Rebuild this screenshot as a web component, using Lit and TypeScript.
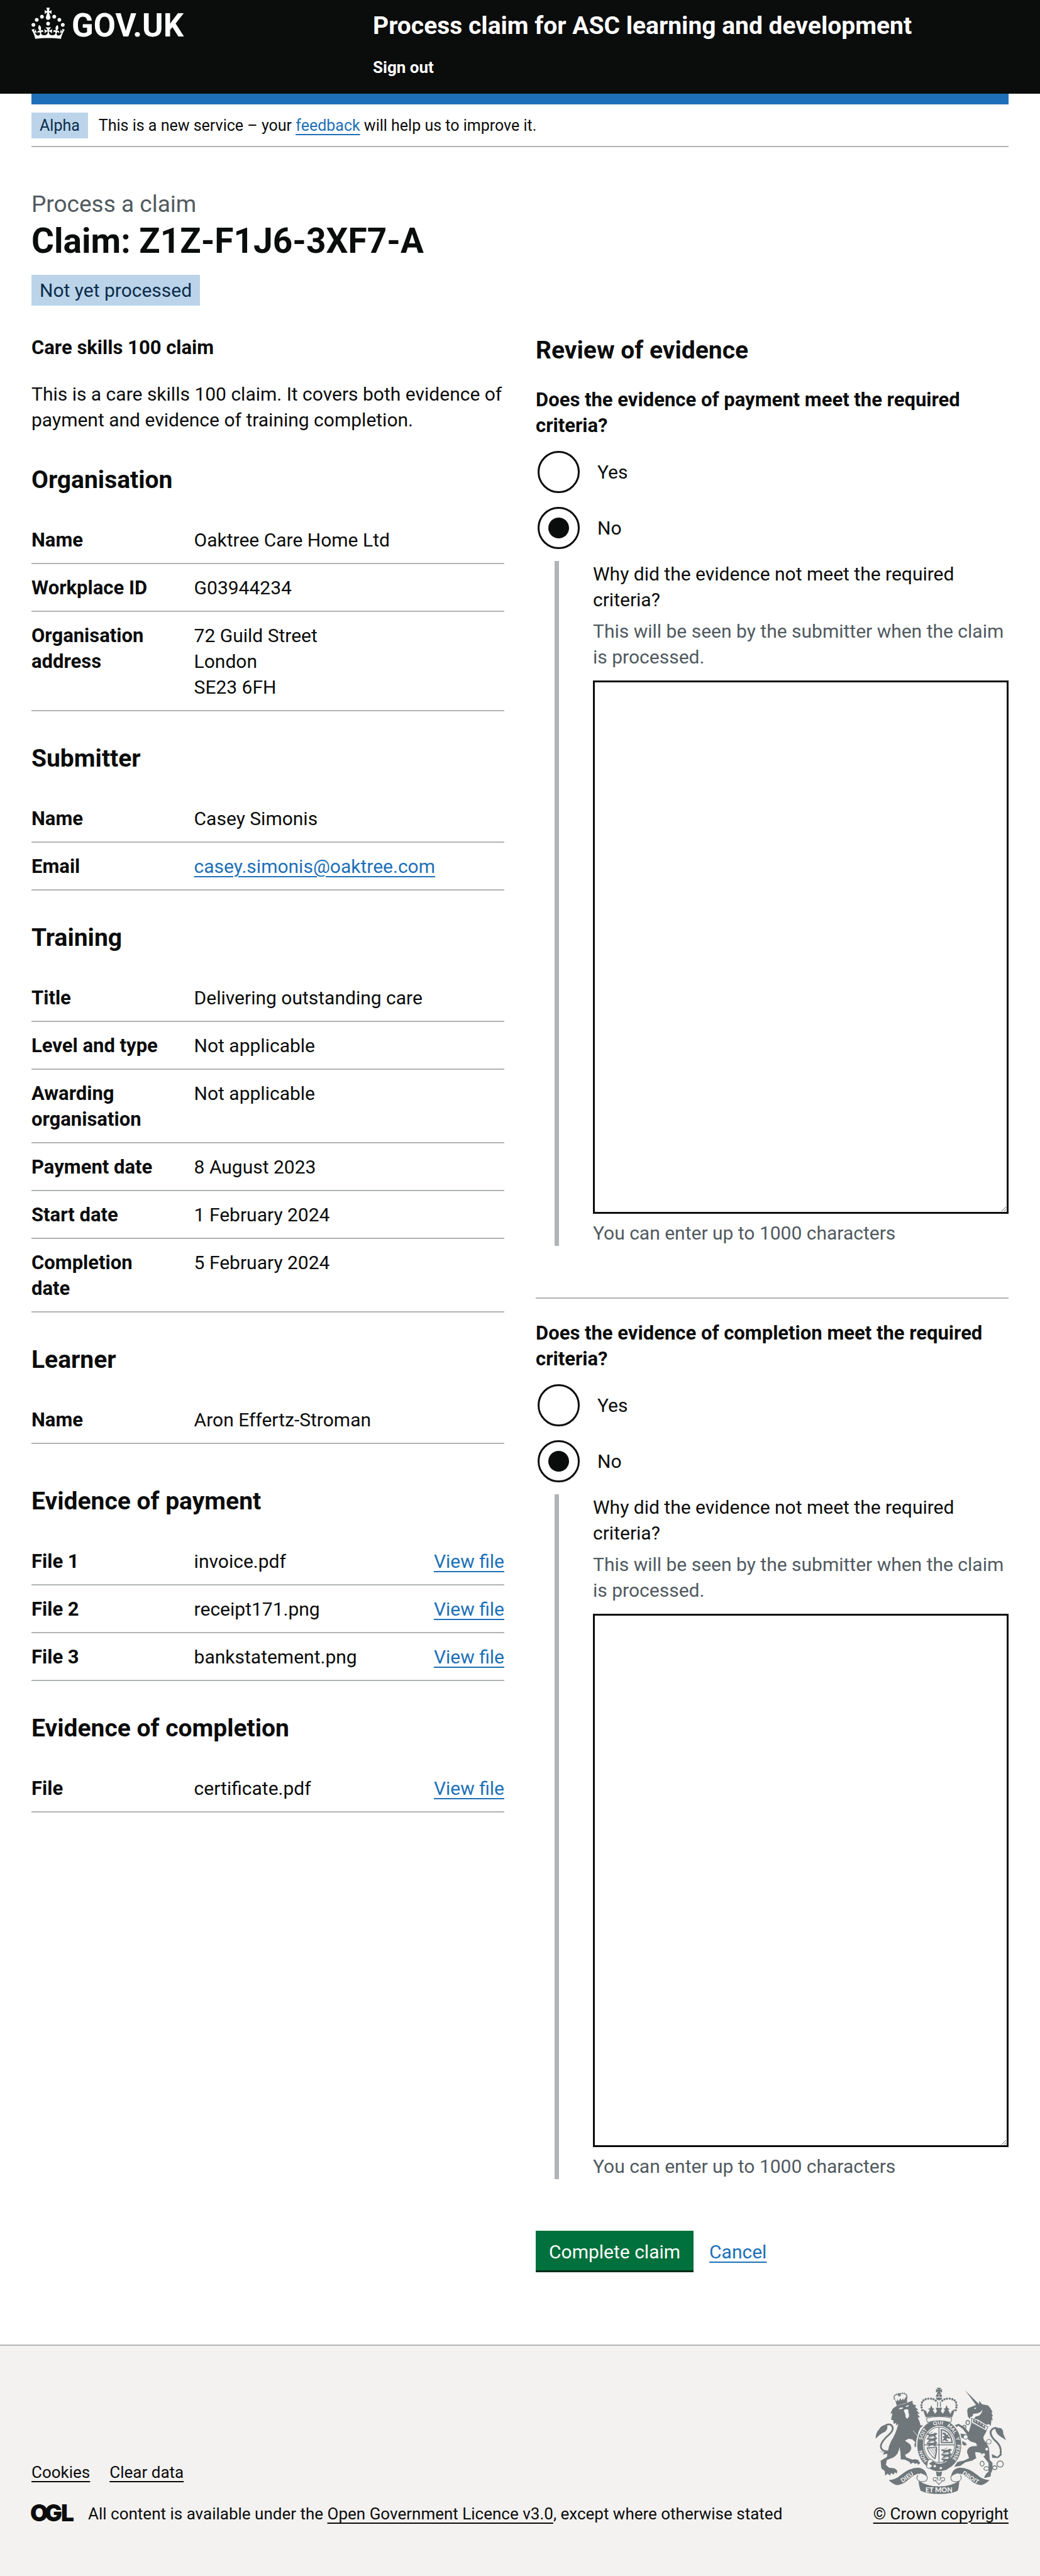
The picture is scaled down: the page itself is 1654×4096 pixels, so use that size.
import { LitElement, html, css, svg, nothing } from "lit";
import { customElement, property } from "lit/decorators.js";

interface Row {
  key: string;
  lines: string[];
  href?: string;
  action?: string;
}

interface Section {
  title: string;
  rows: Row[];
  spaced?: boolean;
}

const SECTIONS: Section[] = [
  {
    title: "Organisation",
    rows: [
      { key: "Name", lines: ["Oaktree Care Home Ltd"] },
      { key: "Workplace ID", lines: ["G03944234"] },
      { key: "Organisation address", lines: ["72 Guild Street", "London", "SE23 6FH"] },
    ],
  },
  {
    title: "Submitter",
    rows: [
      { key: "Name", lines: ["Casey Simonis"] },
      { key: "Email", lines: ["casey.simonis@oaktree.com"], href: "mailto:casey.simonis@oaktree.com" },
    ],
  },
  {
    title: "Training",
    rows: [
      { key: "Title", lines: ["Delivering outstanding care"] },
      { key: "Level and type", lines: ["Not applicable"] },
      { key: "Awarding organisation", lines: ["Not applicable"] },
      { key: "Payment date", lines: ["8 August 2023"] },
      { key: "Start date", lines: ["1 February 2024"] },
      { key: "Completion date", lines: ["5 February 2024"] },
    ],
  },
  {
    title: "Learner",
    rows: [{ key: "Name", lines: ["Aron Effertz-Stroman"] }],
  },
  {
    title: "Evidence of payment",
    spaced: true,
    rows: [
      { key: "File 1", lines: ["invoice.pdf"], action: "View file" },
      { key: "File 2", lines: ["receipt171.png"], action: "View file" },
      { key: "File 3", lines: ["bankstatement.png"], action: "View file" },
    ],
  },
  {
    title: "Evidence of completion",
    rows: [{ key: "File", lines: ["certificate.pdf"], action: "View file" }],
  },
];

const base = css`
  * {
    box-sizing: border-box;
  }
  a {
    color: #1d70b8;
    text-decoration: underline;
    text-decoration-thickness: 2px;
    text-underline-offset: 5px;
  }
`;

@customElement("site-header")
export class SiteHeader extends LitElement {
  static styles = [
    base,
    css`
      :host {
        display: block;
        background: #0b0c0c;
      }
      .inner {
        margin: 0 50px;
        display: grid;
        grid-template-columns: 1fr 2fr;
      }
      .logo {
        display: flex;
        align-items: flex-start;
        gap: 11px;
        padding-top: 12px;
        color: #fff;
        text-decoration: none;
        font-size: 51px;
        line-height: 58px;
        font-weight: 700;
      }
      .crown {
        width: 53px;
        height: 50px;
        fill: currentColor;
      }
      .content {
        display: flex;
        flex-direction: column;
        align-items: flex-start;
        gap: 25px;
        padding: 16px 0 25px 25px;
      }
      .content a {
        color: #fff;
        text-decoration: none;
        font-weight: 700;
      }
      .service {
        font-size: 39px;
        line-height: 50px;
      }
      .nav {
        font-size: 26px;
        line-height: 33px;
      }
    `,
  ];

  render() {
    return html`<header class="inner">
      <a class="logo" href="#">
        <svg class="crown" viewBox="0 0 32 30" aria-hidden="true">
          <path
            d="M22.6 10.4c-1 .4-2-.1-2.4-1-.4-.9.1-2 1-2.4.9-.4 2 .1 2.4 1s-.1 2-1 2.4m-5.9 6.7c-.9.4-2-.1-2.4-1-.4-.9.1-2 1-2.4.9-.4 2 .1 2.4 1s-.1 2-1 2.4m10.8-3.7c-1 .4-2-.1-2.4-1-.4-.9.1-2 1-2.4.9-.4 2 .1 2.4 1s0 2-1 2.4m3.3 4.8c-1 .4-2-.1-2.4-1-.4-.9.1-2 1-2.4.9-.4 2 .1 2.4 1s-.1 2-1 2.4M17 4.7l2.3 1.2V2.5l-2.3.7-.2-.2.9-3h-3.4l.9 3-.2.2c-.1.1-2.3-.7-2.3-.7v3.4L15 4.7c.1.1.1.2.2.2l-1.3 4c-.1.2-.1.4-.1.6 0 1.1.8 2 1.9 2.2h.7c1-.2 1.9-1.1 1.9-2.1 0-.2 0-.4-.1-.6l-1.3-4c-.1-.2 0-.2.1-.3m-7.6 5.7c.9.4 2-.1 2.4-1 .4-.9-.1-2-1-2.4-.9-.4-2 .1-2.4 1s0 2 1 2.4m-5 3c.9.4 2-.1 2.4-1 .4-.9-.1-2-1-2.4-.9-.4-2 .1-2.4 1s.1 2 1 2.4m-3.2 4.8c.9.4 2-.1 2.4-1 .4-.9-.1-2-1-2.4-.9-.4-2 .1-2.4 1s0 2 1 2.4m14.8 11c4.4 0 8.6.3 12.3.8 1.1-4.5 2.4-7 3.7-8.8l-2.5-.9c.2 1.3.3 1.9 0 2.7-.4-.4-.8-1.1-1.1-2.3l-1.2 4c.7-.5 1.3-.8 2-.9-1.1 2.5-2.6 3.1-3.5 3-1.1-.2-1.7-1.2-1.5-2.1.3-1.2 1.5-1.5 2.1-.1 1.1-2.3-.8-3-2-2.3 1.9-1.9 2.1-3.5.6-5.6-2.1 1.6-2.1 3.2-1.2 5.5-1.2-1.4-3.2-.6-2.5 1.6.9-1.4 2.1-.5 1.9.8-.2 1.1-1.7 2.1-3.5 1.9-2.7-.2-2.9-2.1-2.9-3.6.7-.1 1.9.5 2.9 1.9l.4-4.3c-1.1 1.1-2.1 1.4-3.2 1.4.4-1.2 2.1-3 2.1-3h-5.4s1.7 1.9 2.1 3c-1.1 0-2.1-.2-3.2-1.4l.4 4.3c1-1.4 2.2-2 2.9-1.9-.1 1.5-.2 3.4-2.9 3.6-1.9.2-3.4-.8-3.5-1.9-.2-1.3 1-2.2 1.9-.8.7-2.3-1.2-3-2.5-1.6.9-2.2.9-3.9-1.2-5.5-1.5 2-1.3 3.7.6 5.6-1.2-.7-3.1 0-2 2.3.6-1.4 1.8-1.1 2.1.1.2.9-.3 1.9-1.5 2.1-.9.2-2.4-.5-3.5-3 .6 0 1.2.3 2 .9l-1.2-4c-.3 1.1-.7 1.9-1.1 2.3-.3-.8-.2-1.4 0-2.7l-2.9.9C1.3 23 2.6 25.5 3.7 30c3.7-.5 7.9-.8 12.3-.8"
          ></path>
        </svg>
        <span>GOV.UK</span>
      </a>
      <div class="content">
        <a class="service" href="#">Process claim for ASC learning and development</a>
        <a class="nav" href="#">Sign out</a>
      </div>
    </header>`;
  }
}

@customElement("summary-section")
export class SummarySection extends LitElement {
  @property({ attribute: false }) section!: Section;

  static styles = [
    base,
    css`
      :host {
        display: block;
      }
      .title {
        margin: 50px 0 33px;
        font-size: 39px;
        line-height: 50px;
        font-weight: 700;
      }
      .title.spaced {
        margin-top: 66px;
      }
      .list {
        margin: 0;
      }
      .row {
        display: grid;
        grid-template-columns: 30% 1fr auto;
        column-gap: 33px;
        padding: 17px 0 16px;
        border-bottom: 2px solid #b1b4b6;
      }
      .key {
        font-size: 31px;
        font-weight: 700;
      }
      .value {
        margin: 0;
      }
    `,
  ];

  render() {
    const { title, rows, spaced } = this.section;
    return html`<h2 class="title ${spaced ? "spaced" : ""}">${title}</h2>
      <dl class="list">
        ${rows.map(
          (r) => html`<div class="row">
            <dt class="key">${r.key}</dt>
            <dd class="value">
              ${r.href
                ? html`<a href=${r.href}>${r.lines[0]}</a>`
                : r.lines.map((line, i) => html`${i ? html`<br />` : nothing}${line}`)}
            </dd>
            ${r.action ? html`<dd class="value"><a href="#">${r.action}</a></dd>` : nothing}
          </div>`
        )}
      </dl>`;
  }
}

@customElement("evidence-question")
export class EvidenceQuestion extends LitElement {
  @property() name = "";

  static styles = [
    base,
    css`
      :host {
        display: block;
      }
      .group {
        margin: 0;
        padding: 0;
        border: 0;
        min-width: 0;
      }
      .legend {
        padding: 0;
        margin-bottom: 17px;
        font-size: 31px;
        font-weight: 700;
      }
      .option {
        display: flex;
        align-items: center;
        gap: 28px;
        height: 73px;
        padding-left: 3px;
        margin-bottom: 16px;
      }
      .radio {
        appearance: none;
        flex: none;
        display: grid;
        place-items: center;
        width: 67px;
        height: 67px;
        margin: 0;
        border: 3px solid #0b0c0c;
        border-radius: 50%;
        background: #fff;
      }
      .radio:checked::before {
        content: "";
        width: 33px;
        height: 33px;
        border-radius: 50%;
        background: #0b0c0c;
      }
      .conditional {
        display: flex;
        flex-direction: column;
        margin-left: 30px;
        padding-left: 54px;
        border-left: 7px solid #b1b4b6;
      }
      .hint {
        margin: 9px 0 17px;
        color: #505a5f;
      }
      .box {
        display: block;
        width: 100%;
        margin: 0 0 10px;
        padding: 11px 8px;
        border: 3px solid #0b0c0c;
        border-radius: 0;
        font: inherit;
        color: inherit;
        resize: vertical;
      }
      .count {
        margin: 0;
        color: #505a5f;
      }
    `,
  ];

  render() {
    const n = this.name;
    const question = `Does the evidence of ${n} meet the required criteria?`;
    return html`<fieldset class="group">
      <legend class="legend">${question}</legend>
      <div class="option">
        <input class="radio" type="radio" name=${n} id="${n}-yes" value="yes" />
        <label for="${n}-yes">Yes</label>
      </div>
      <div class="option">
        <input class="radio" type="radio" name=${n} id="${n}-no" value="no" checked />
        <label for="${n}-no">No</label>
      </div>
      <div class="conditional">
        <label for="${n}-reason">Why did the evidence not meet the required criteria?</label>
        <p class="hint" id="${n}-hint">This will be seen by the submitter when the claim is processed.</p>
        <textarea class="box" id="${n}-reason" rows="20" aria-describedby="${n}-hint ${n}-count"></textarea>
        <p class="count" id="${n}-count">You can enter up to 1000 characters</p>
      </div>
    </fieldset>`;
  }
}

const LIGHT = "#f3f2f1";
const INK = "#6f777b";

/* Three stacked passant lions, used for the first and fourth quarters. */
const lions = (x: number, y: number) =>
  [0, 26, 52].map(
    (dy) => svg`<g transform="translate(${x} ${y + dy})">
      <path d="M0 4l10-4 6 5 22-1 8-6 12 2 4 6-8 4-4 8 8 3-2 3-14-1-2-6-16 1-6 6-10 1-2-3 8-5-2-5-10-2z"/>
      <path d="M16 5c4-8 14-10 20-12" fill="none" stroke=${INK} stroke-width="3"/>
    </g>`
  );

/* Words of the garter, each centred at a fraction of the ring, clockwise from its foot. */
const GARTER: [string, string][] = [
  ["HON", "16%"],
  ["SOIT", "34%"],
  ["QUI", "49%"],
  ["MAL", "61%"],
  ["Y", "70%"],
  ["PENSE", "81%"],
];

const coatOfArms = svg`
  <g fill=${INK}>
    <!-- lion's crown -->
    <path d="M360 150Q352 122 392 122Q436 108 432 150" fill="none" stroke=${INK} stroke-width="9" stroke-linecap="round" stroke-dasharray="0 11"/>
    <path d="M385 115l6 6 8-2-4 9 5 6-9-1-5 7-2-9-8-2 8-4z"/>
    <path d="M364 152l10 14 4-14 8 12 8-18 8 14 8-14 4 12 10-14 8-6 2 34-60 18z"/>
    <!-- lion -->
    <path d="M352 205l22-14 46-13 44-17 3 20 20 8-8 7 20 19-13-1 20 22-14-1 16 22-13 1 12 28 3 16 17 2-17 14-13 28 8 18 14 26 6 34-8 17-7-20-3 15-9-10-3 14-8-16-9 6-3-20 7-8-18-18-22-4-20 10q33 12 36 45-3 24-36 38l6 14 36 14 14-3 18 4 13 18-10 11-8-10-12 4-8-8-18 8-6-12-26-12-24-2-2-44-6-28q-2 42-36 62l-36 14-6 28 18 16 32 4 16 12-3 18-12-8-5 14-16-9-6 14-14-11-14 12-2-26-20-16-4-44 36-22 6-34q4-28 18-56 28-44 42-100l-14 8 2-14-14 6-4-22-12-2 8-38-12 2z"/>
    <path d="M384 208q14-12 28-6-8 12-28 6zM424 196q6-10 20-10-4 12-20 10zM414 216q10-10 26-4l2 20q8 20-6 32-14-2-12-22z" fill=${LIGHT}/>
    <path d="M468 334q30 30 42 62" fill="none" stroke=${LIGHT} stroke-width="3"/>
    <path d="M422 392l24-10 2 16 14-6 0 14 18 8-20 4z" fill=${LIGHT}/>
    <path d="M334 452q-52 6-52-32 4-26 50-66 34-34 8-54-18-8-36 6" fill="none" stroke=${INK} stroke-width="10"/>
    <path d="M252 380q0-34 20-54 16-30 46-24 8 22-12 38-24 8-54 40zM268 452l34 4 32-10-10 20-32 6 10-12z"/>
    <!-- unicorn -->
    <path d="M768 101l80 80-16 6zM780 218l4-14 46-18 18-4 2-20 16 20 34 6 14 16 12 22-6 4 8 18-6 4 6 24-8-6-4 36-10-10-16 4-48-30-22-4 12-20q-20-4-26 8l-6-2-4 14-12-14z"/>
    <path d="M812 252q50 6 56-40-12 26-54 24zM818 204l14-4-4 10z" fill=${LIGHT}/>
    <path d="M806 262l94 50-12 22-84-46z" fill=${LIGHT} stroke=${INK} stroke-width="4"/>
    <path d="M812 282l6-16 8 18 10-14 4 22 12-14 4 22 12-12 2 22 12-8 2 22z"/>
    <path d="M804 290l88 46-18 32q-4 18 16 34l16 32 4 68 16 18-1 42-8 16-2 20-32 8-6-2 12-22 14-12 0-50-24-30q-8-20-26-30l-26-4q-2 20 6 36l-24 14-40 10-28 20-36 6 18-28 38-8 30-14-12-34q0-26 28-34l30-2-6-16-32-10-22-20-28 0-6 12 28 16 8 14-10-2 0 6-22-12-22-30-4-32 58 8-26-34-24-16-14 10-8-14 24-8 34 20 24 28z"/>
    <path d="M972 466q10-44-36-80-32-36-16-56 16-18 36-8" fill="none" stroke=${INK} stroke-width="10"/>
    <path d="M942 324q46-20 46 28l16 36-28-18q-30-16-34-46zM922 468l32 16 22-24 4 14-22 18-34-2z"/>
    <g fill="none" stroke=${INK} stroke-width="5">
      <ellipse cx="783" cy="287" rx="10" ry="12"/><ellipse cx="764" cy="313" rx="9" ry="10"/>
      <ellipse cx="866" cy="524" rx="11" ry="14"/><ellipse cx="891" cy="552" rx="14" ry="11"/>
      <ellipse cx="939" cy="547" rx="12" ry="11"/><circle cx="970" cy="526" r="18"/>
    </g>
    <g fill=${LIGHT} stroke=${INK} stroke-width="4">
      <circle cx="771" cy="370" r="13"/><circle cx="905" cy="397" r="13"/>
    </g>
    <circle cx="893" cy="440" r="8" fill=${LIGHT}/><circle cx="875" cy="472" r="8" fill=${LIGHT}/>
    <!-- garter -->
    <ellipse cx="619" cy="417" rx="134" ry="156" fill=${LIGHT}/>
    <ellipse cx="619" cy="417" rx="127" ry="148"/>
    <ellipse cx="619" cy="415" rx="94" ry="109" fill=${LIGHT}/>
    <ellipse cx="619" cy="415" rx="88" ry="102" fill="none" stroke=${INK} stroke-width="4"/>
    <path id="garter" d="M619 536A101 119 0 0 1 619 298A101 119 0 0 1 619 536" fill="none"/>
    ${GARTER.map(
      ([word, at]) =>
        svg`<text class="motto" font-size="29" text-anchor="middle"><textPath href="#garter" startOffset=${at}>${word}</textPath></text>`
    )}
    <!-- quarters -->
    <path d="M615 313h5v204h-5zM531 413h176v5h-176z"/>
    ${lions(546, 348)}
    ${lions(630, 440)}
    <path d="M628 324q60 6 70 82h-70zm7 8v66h54q-8-56-54-66z" fill-rule="evenodd"/>
    <path d="M640 344l16 4 6 12 12-8-4 14 12 8-6 8-10-6-6 8 12 8-6 4-20-8-6 8-2-8 10-12-10-4 2-6 10 0-4-12-8 2z"/>
    <path d="M546 430l60-4q2 36-10 74-38-26-50-70zm8 6q10 34 38 54 8-28 6-58z" fill-rule="evenodd"/>
    <path d="M562 436l32 44M574 434l22 32M586 432l12 18" stroke=${INK} stroke-width="3"/>
    <!-- buckle -->
    <path d="M558 516q60 38 128 22l-26 22q-70 20-106-18z"/>
    <path d="M552 506q20-16 34 4l-8 30q-16 18-32 4z" fill=${LIGHT} stroke=${INK} stroke-width="4"/>
    <path d="M560 524l20-14 20 10-20 16z"/>
    <circle cx="593" cy="538" r="7" fill=${LIGHT}/><circle cx="628" cy="549" r="7" fill=${LIGHT}/>
    <!-- royal crown -->
    <path d="M604 87h27l-10 13 14-7v21l-14-7 10 13h-27l10-13-14 7v-21l14 7z"/>
    <path d="M599 138q2-18 18-19 17 1 19 19zM599 143h37q-2 14-18 16-17-2-19-16z"/>
    <path d="M617 120v18" stroke=${LIGHT} stroke-width="3"/>
    <path d="M521 216Q502 152 560 149Q590 148 606 168M714 216Q733 152 675 149Q645 148 629 168" fill="none" stroke=${INK} stroke-width="13" stroke-linecap="round" stroke-dasharray="0 15"/>
    <path d="M607 166h5v30h-5zM623 166h5v30h-5z"/>
    <path d="M526 210l18 12 6 16 14-24-10-6 12-4 7-18 7 18 12 4-10 6 12 22 12-14-8-20h38l-8 20 12 14 12-22-10-6 12-4 7-18 7 18 12 4-10 6 14 24 6-16 18-12q-4 24-15 47-75-14-152 0-11-23-15-47z"/>
    <path d="M606 198l12 12 12-12-3 16 3 18-12-10-12 10 3-18z"/>
    <path d="M552 260q66-16 132 0 8 2 6 12l-6 14q-66-20-132 0l-6-14q-2-10 6-12z" fill=${LIGHT} stroke=${INK} stroke-width="4"/>
    <!-- motto scroll -->
    <path d="M328 619q40-2 70-30 50-42 100-42 46 4 52 56-28-4-50-22-26 4-60 36-38 34-70 30-22-6-42-28z"/>
    <path d="M908 619q-40-2-70-30-50-42-100-42-46 4-52 56 28-4 50-22 26 4 60 36 38 34 70 30 22-6 42-28z"/>
    <path d="M496 590q-14 22 6 34 14 8 40 0 10-10 8-24-10-14-38-22M740 590q14 22-6 34-14 8-40 0-10-10-8-24 10-14 38-22" fill=${LIGHT} stroke=${INK} stroke-width="4"/>
    <path d="M500 622q50 34 118 33 66 1 117-33-2 36-10 58-40 19-107 18-66 1-106-18-10-22-12-58z"/>
    <text class="motto" font-size="34" text-anchor="middle" transform="translate(440 611) rotate(-34)">DIEU</text>
    <text class="motto" font-size="34" text-anchor="middle" transform="translate(793 613) rotate(33)">DROIT</text>
    <text class="motto" font-size="40" text-anchor="middle" x="617" y="689">ET MON</text>
    <!-- pendant -->
    <path d="M600 569q18 6 35 0l-4 26h-27z"/>
    <path d="M617 588q14 16 4 34 4-20 24-18 10 10 0 20-12 0-10-8 0 16-14 22-4 14-8 0-14-6-14-22 2 8-10 8-10-10 0-20 20-2 24 18-10-18 4-34z" fill=${LIGHT} stroke=${INK} stroke-width="4"/>
  </g>`;

@customElement("site-footer")
export class SiteFooter extends LitElement {
  static styles = [
    base,
    css`
      :host {
        display: block;
        background: #f3f2f1;
        border-top: 2px solid #b1b4b6;
        font-size: 26px;
        line-height: 33px;
      }
      .inner {
        margin: 0 50px;
        padding: 66px 0 82px;
        display: flex;
        justify-content: space-between;
        align-items: flex-end;
      }
      a {
        color: #0b0c0c;
      }
      .links {
        display: flex;
        gap: 31px;
        margin: 0 0 33px;
        padding: 0;
        list-style: none;
      }
      .licence {
        display: flex;
        gap: 23px;
      }
      .ogl {
        width: 67px;
        height: 29px;
        overflow: visible;
      }
      .oglword {
        font: 900 37px Inter, Roboto, sans-serif;
        fill: #0b0c0c;
      }
      .copyright {
        display: flex;
        flex-direction: column;
        align-items: center;
        gap: 15px;
      }
      .arms {
        width: 208px;
        height: 170px;
      }
      .motto {
        font-family: Lato, sans-serif;
        font-weight: 900;
        fill: #f3f2f1;
      }
    `,
  ];

  render() {
    return html`<footer class="inner">
      <div>
        <ul class="links">
          <li><a href="#">Cookies</a></li>
          <li><a href="#">Clear data</a></li>
        </ul>
        <div class="licence">
          <svg class="ogl" viewBox="0 0 67 29" aria-hidden="true">
            <text class="oglword" y="28" x="-2 21 47">OGL</text>
          </svg>
          <span
            >All content is available under the
            <a href="#">Open Government Licence v3.0</a>, except where otherwise stated</span
          >
        </div>
      </div>
      <a class="copyright" href="#">
        <svg class="arms" viewBox="250 84 754 616" aria-hidden="true">${coatOfArms}</svg>
        <span>© Crown copyright</span>
      </a>
    </footer>`;
  }
}

@customElement("app-root")
export class AppRoot extends LitElement {
  static styles = [
    base,
    css`
      :host {
        display: block;
        background: #fff;
        color: #0b0c0c;
        font-family: Roboto, "Liberation Sans", sans-serif;
        font-size: 30px;
        line-height: 41px;
      }
      .wrap {
        margin: 0 50px;
      }
      .bar {
        height: 17px;
        background: #1d70b8;
      }
      .tag {
        display: inline-block;
        padding: 4px 13px;
        background: #bbd4ea;
        color: #0c2d4a;
        font-weight: 400;
      }
      .phase {
        display: flex;
        align-items: center;
        gap: 17px;
        padding: 13px 0 12px;
        border-bottom: 2px solid #b1b4b6;
        font-size: 25px;
        line-height: 33px;
      }
      .main {
        padding: 66px 0 118px;
      }
      .caption {
        display: block;
        font-size: 37px;
        line-height: 50px;
        color: #505a5f;
      }
      .title {
        margin: 0 0 21px;
        font-size: 55px;
        line-height: 66px;
        font-weight: 700;
      }
      .columns {
        display: grid;
        grid-template-columns: 1fr 1fr;
        gap: 50px;
        align-items: start;
        margin-top: 46px;
      }
      .kind {
        margin: 0 0 33px;
        font-size: 31px;
        line-height: 41px;
      }
      .intro {
        margin: 0;
      }
      .review {
        margin: 0 0 33px;
        font-size: 39px;
        line-height: 50px;
      }
      .rule {
        margin: 82px 0 34px;
        border: 0;
        border-top: 2px solid #b1b4b6;
      }
      .actions {
        display: flex;
        align-items: baseline;
        gap: 25px;
        margin-top: 82px;
      }
      .button {
        margin: 0;
        padding: 13px 21px 9px;
        border: 0;
        border-radius: 0;
        background: #00703c;
        box-shadow: 0 3px 0 #002d18;
        color: #fff;
        font: inherit;
      }
    `,
  ];

  render() {
    return html`<site-header></site-header>
      <div class="wrap">
        <div class="bar"></div>
        <div class="phase">
          <strong class="tag">Alpha</strong>
          <span>This is a new service – your <a href="#">feedback</a> will help us to improve it.</span>
        </div>
        <main class="main">
          <span class="caption">Process a claim</span>
          <h1 class="title">Claim: Z1Z-F1J6-3XF7-A</h1>
          <div><strong class="tag">Not yet processed</strong></div>
          <div class="columns">
            <div>
              <h3 class="kind">Care skills 100 claim</h3>
              <p class="intro">
                This is a care skills 100 claim. It covers both evidence of payment and evidence of training completion.
              </p>
              ${SECTIONS.map((s) => html`<summary-section .section=${s}></summary-section>`)}
            </div>
            <form>
              <h2 class="review">Review of evidence</h2>
              <evidence-question name="payment"></evidence-question>
              <hr class="rule" />
              <evidence-question name="completion"></evidence-question>
              <div class="actions">
                <button class="button" type="button">Complete claim</button>
                <a href="#">Cancel</a>
              </div>
            </form>
          </div>
        </main>
      </div>
      <site-footer></site-footer>`;
  }
}
